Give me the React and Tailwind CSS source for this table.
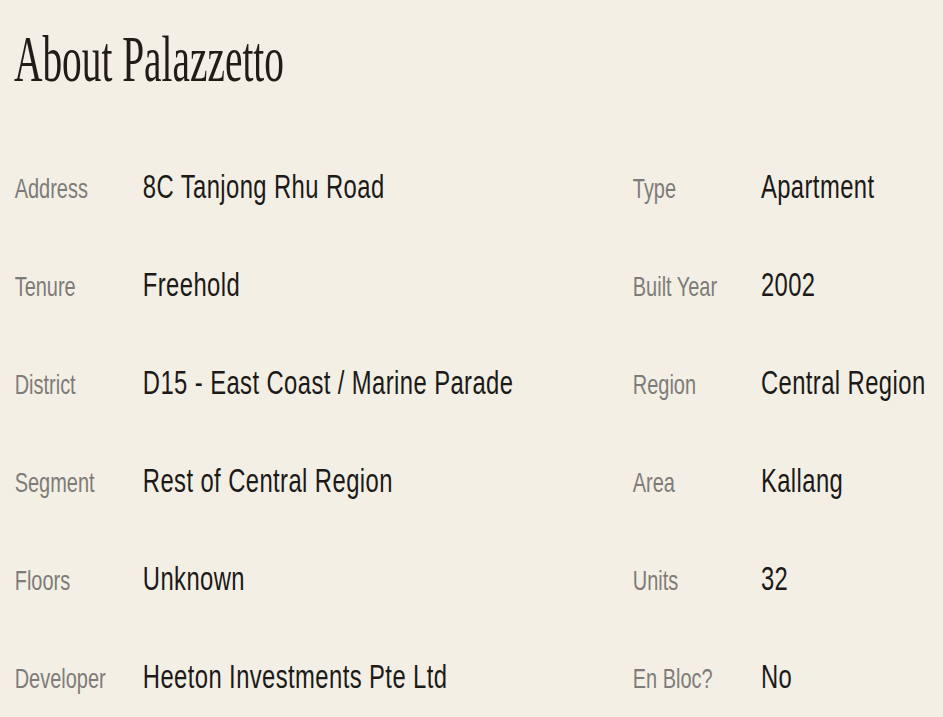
const details = [
  ["Address", "8C Tanjong Rhu Road", "Type", "Apartment"],
  ["Tenure", "Freehold", "Built Year", "2002"],
  ["District", "D15 - East Coast / Marine Parade", "Region", "Central Region"],
  ["Segment", "Rest of Central Region", "Area", "Kallang"],
  ["Floors", "Unknown", "Units", "32"],
  ["Developer", "Heeton Investments Pte Ltd", "En Bloc?", "No"],
];

function Label({ children }) {
  return (
    <div className="text-[28.5px] leading-[98px] text-[#7e7c79] whitespace-nowrap">
      {children}
    </div>
  );
}

function Value({ children }) {
  return (
    <div className="text-[34px] leading-[98px] tracking-[0.6px] text-[#1b1a19] whitespace-nowrap">
      {children}
    </div>
  );
}

export default function App() {
  return (
    <div className="w-[943px] h-[717px] overflow-hidden bg-[#f4efe4]">
      {/* page is laid out wide, then squeezed to the narrow look of the shot */}
      <div className="w-[1347px] origin-top-left scale-x-[0.7] pt-[27px] font-['Liberation_Sans',Arial,sans-serif]">
        <h2 className="pl-[20px] text-[65px] leading-[65px] text-[#211c18] font-['Liberation_Serif','Times_New_Roman',serif]">
          <span className="inline-block origin-left scale-x-[0.865] whitespace-nowrap">
            About Palazzetto
          </span>
        </h2>

        <div className="mt-[45px] pl-[21px] grid grid-cols-[183px_700px_183px_1fr] auto-rows-[98px] items-baseline">
          {details.map(([l1, v1, l2, v2]) => (
            <div key={l1} className="contents">
              <Label>{l1}</Label>
              <Value>{v1}</Value>
              <Label>{l2}</Label>
              <Value>{v2}</Value>
            </div>
          ))}
        </div>
      </div>
    </div>
  );
}
